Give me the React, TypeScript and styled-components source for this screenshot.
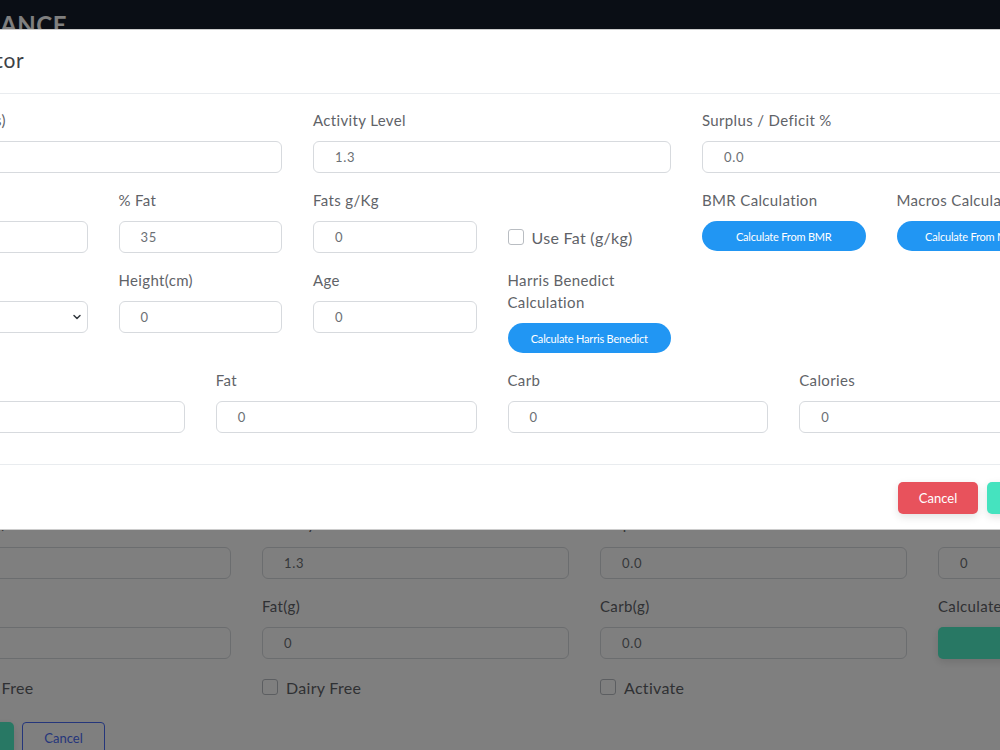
import React from "react";
import styled, { createGlobalStyle } from "styled-components";
import { ChevronDown } from "lucide-react";

const GlobalStyle = createGlobalStyle`
	html, body {
		margin: 0;
		padding: 0;
		overflow: hidden;
		background: #ffffff;
	}
	* {
		box-sizing: border-box;
	}
	body {
		font-family: Lato, "Open Sans", sans-serif;
	}
`;

// the page is wider than the window and scrolled a little to the right
const Stage = styled.div`
	position: relative;
	width: 1400px;
	height: 100vh;
	margin-left: -100px;
	overflow: hidden;
	background: #ffffff;
`;

const Navbar = styled.header`
	height: 56px;
	padding: 9px 0 0 54px;
	background: #141c2a;
`;

const Brand = styled.div`
	font-size: 24px;
	line-height: 32px;
	font-weight: 700;
	letter-spacing: 0.5px;
	color: #ffffff;
`;

const PageContent = styled.main`
	padding: 456px 0 0 24px;
`;

const PageGrid = styled.div`
	display: grid;
	grid-template-columns: repeat(4, 307px);
	column-gap: 31px;
	margin-bottom: 16px;
`;

const Field = styled.div<{ $span?: number }>`
	display: flex;
	flex-direction: column;
	grid-column: span ${(p) => p.$span ?? 1};
`;

const CheckField = styled(Field)`
	justify-content: flex-end;
`;

const Label = styled.label<{ $gap?: number }>`
	font-size: 15px;
	line-height: 22px;
	letter-spacing: 0.35px;
	margin-bottom: ${(p) => p.$gap ?? 10}px;
	color: #5f6368;
`;

const Input = styled.div<{ $padRight?: number }>`
	height: 32px;
	display: flex;
	align-items: center;
	justify-content: space-between;
	padding: 0 ${(p) => p.$padRight ?? 10}px 0 21px;
	border: 1px solid #d7dade;
	border-radius: 6px;
	background: #ffffff;
	font-size: 13px;
	letter-spacing: 0.7px;
	color: #6c7075;
`;

const CheckRow = styled.div`
	display: grid;
	grid-template-columns: repeat(4, 307px);
	column-gap: 31px;
	height: 24px;
	margin-bottom: 23px;
`;

const Check = styled.label<{ $height?: number }>`
	display: flex;
	align-items: center;
	gap: 8px;
	height: ${(p) => p.$height ?? 24}px;
	font-size: 16px;
	letter-spacing: 0.3px;
	color: #5f6368;
`;

const Box = styled.span`
	width: 16px;
	height: 16px;
	border: 1.5px solid #b9bdc2;
	border-radius: 3px;
	background: #ffffff;
	flex-shrink: 0;
`;

const Actions = styled.div`
	display: flex;
	gap: 8px;
`;

const SolidButton = styled.button<{ $color: string; $width?: string }>`
	width: ${(p) => p.$width ?? "80px"};
	height: 32px;
	border: none;
	border-radius: 5px;
	background: ${(p) => p.$color};
	color: #ffffff;
	font-family: inherit;
	font-size: 13px;
	box-shadow: 0 3px 8px rgba(0, 0, 0, 0.12);
`;

const OutlineButton = styled.button`
	width: 83px;
	height: 32px;
	border: 1px solid #4a6cf7;
	border-radius: 4px;
	background: transparent;
	color: #4a6cf7;
	font-family: inherit;
	font-size: 13px;
`;

const Backdrop = styled.div`
	position: absolute;
	inset: 0;
	background: rgba(0, 0, 0, 0.5);
`;

const Dialog = styled.div`
	position: absolute;
	top: 29px;
	left: 0;
	width: 1184px;
	background: #ffffff;
	border: 1px solid rgba(0, 0, 0, 0.2);
`;

const DialogHeader = styled.div`
	padding: 13px 23px 17px;
	border-bottom: 1px solid #e9ecef;
`;

const Title = styled.h5`
	margin: 0;
	font-size: 21px;
	line-height: 33px;
	font-weight: 400;
	letter-spacing: 0.7px;
	color: #3d4247;
`;

const DialogBody = styled.div`
	padding: 15px 23px;
`;

const Row = styled.div`
	display: grid;
	grid-template-columns: repeat(12, 1fr);
	column-gap: 31px;
	margin-bottom: 16px;
`;

const PillButton = styled.button`
	height: 30px;
	width: 100%;
	border: none;
	border-radius: 15px;
	background: #2196f3;
	color: #ffffff;
	font-family: inherit;
	font-size: 11px;
	letter-spacing: -0.2px;
`;

const DialogFooter = styled.div`
	display: flex;
	justify-content: flex-end;
	gap: 9px;
	padding: 17px 16px 15px;
	border-top: 1px solid #e9ecef;
`;

const TextField = ({
	label,
	value,
	span,
	gap,
}: {
	label: string;
	value: string;
	span?: number;
	gap?: number;
}) => (
	<Field $span={span}>
		<Label $gap={gap}>{label}</Label>
		<Input>{value}</Input>
	</Field>
);

const ButtonField = ({ label, text, span }: { label: string; text: string; span: number }) => (
	<Field $span={span}>
		<Label>{label}</Label>
		<PillButton>{text}</PillButton>
	</Field>
);

export default function App() {
	return (
		<>
			<GlobalStyle />
			<Stage>
				<Navbar>
					<Brand>BALANCE</Brand>
				</Navbar>
				<PageContent>
					<PageGrid>
						<TextField gap={13} label="Weight (lbs)" value="" />
						<TextField gap={13} label="Activity Level" value="1.3" />
						<TextField gap={13} label="Surplus / Deficit %" value="0.0" />
						<TextField gap={13} label="Calories" value="0" />
					</PageGrid>
					<PageGrid>
						<TextField label="Protein(g)" value="0" />
						<TextField label="Fat(g)" value="0" />
						<TextField label="Carb(g)" value="0.0" />
						<Field>
							<Label>Calculate Macros</Label>
							<SolidButton $color="#50f0c8" $width="100%">
								Calculate
							</SolidButton>
						</Field>
					</PageGrid>
					<CheckRow>
						<Check>
							<Box />
							Gluten Free
						</Check>
						<Check>
							<Box />
							Dairy Free
						</Check>
						<Check>
							<Box />
							Activate
						</Check>
					</CheckRow>
					<Actions>
						<SolidButton $color="#50f0c8" $width="90px">
							Save
						</SolidButton>
						<OutlineButton>Cancel</OutlineButton>
					</Actions>
				</PageContent>

				<Backdrop />
				<Dialog>
					<DialogHeader>
						<Title>Calculator</Title>
					</DialogHeader>
					<DialogBody>
						<Row>
							<TextField span={4} label="Weight (lbs)" value="" />
							<TextField span={4} label="Activity Level" value="1.3" />
							<TextField span={4} label="Surplus / Deficit %" value="0.0" />
						</Row>
						<Row>
							<TextField span={2} label="Weight Kg" value="" />
							<TextField span={2} label="% Fat" value="35" />
							<TextField span={2} label="Fats g/Kg" value="0" />
							<CheckField $span={2}>
								<Check $height={32}>
									<Box />
									Use Fat (g/kg)
								</Check>
							</CheckField>
							<ButtonField span={2} label="BMR Calculation" text="Calculate From BMR" />
							<ButtonField span={2} label="Macros Calculation" text="Calculate From Macros" />
						</Row>
						<Row>
							<Field $span={2}>
								<Label>Gender</Label>
								<Input $padRight={4}>
									Male
									<ChevronDown size={12} strokeWidth={3} color="#343a40" />
								</Input>
							</Field>
							<TextField span={2} label="Height(cm)" value="0" />
							<TextField span={2} label="Age" value="0" />
							<ButtonField span={2} label="Harris Benedict Calculation" text="Calculate Harris Benedict" />
						</Row>
						<Row>
							<TextField span={3} label="Protein" value="0" />
							<TextField span={3} label="Fat" value="0" />
							<TextField span={3} label="Carb" value="0" />
							<TextField span={3} label="Calories" value="0" />
						</Row>
					</DialogBody>
					<DialogFooter>
						<SolidButton $color="#e8525c">Cancel</SolidButton>
						<SolidButton $color="#45e3bf">Save</SolidButton>
					</DialogFooter>
				</Dialog>
			</Stage>
		</>
	);
}
